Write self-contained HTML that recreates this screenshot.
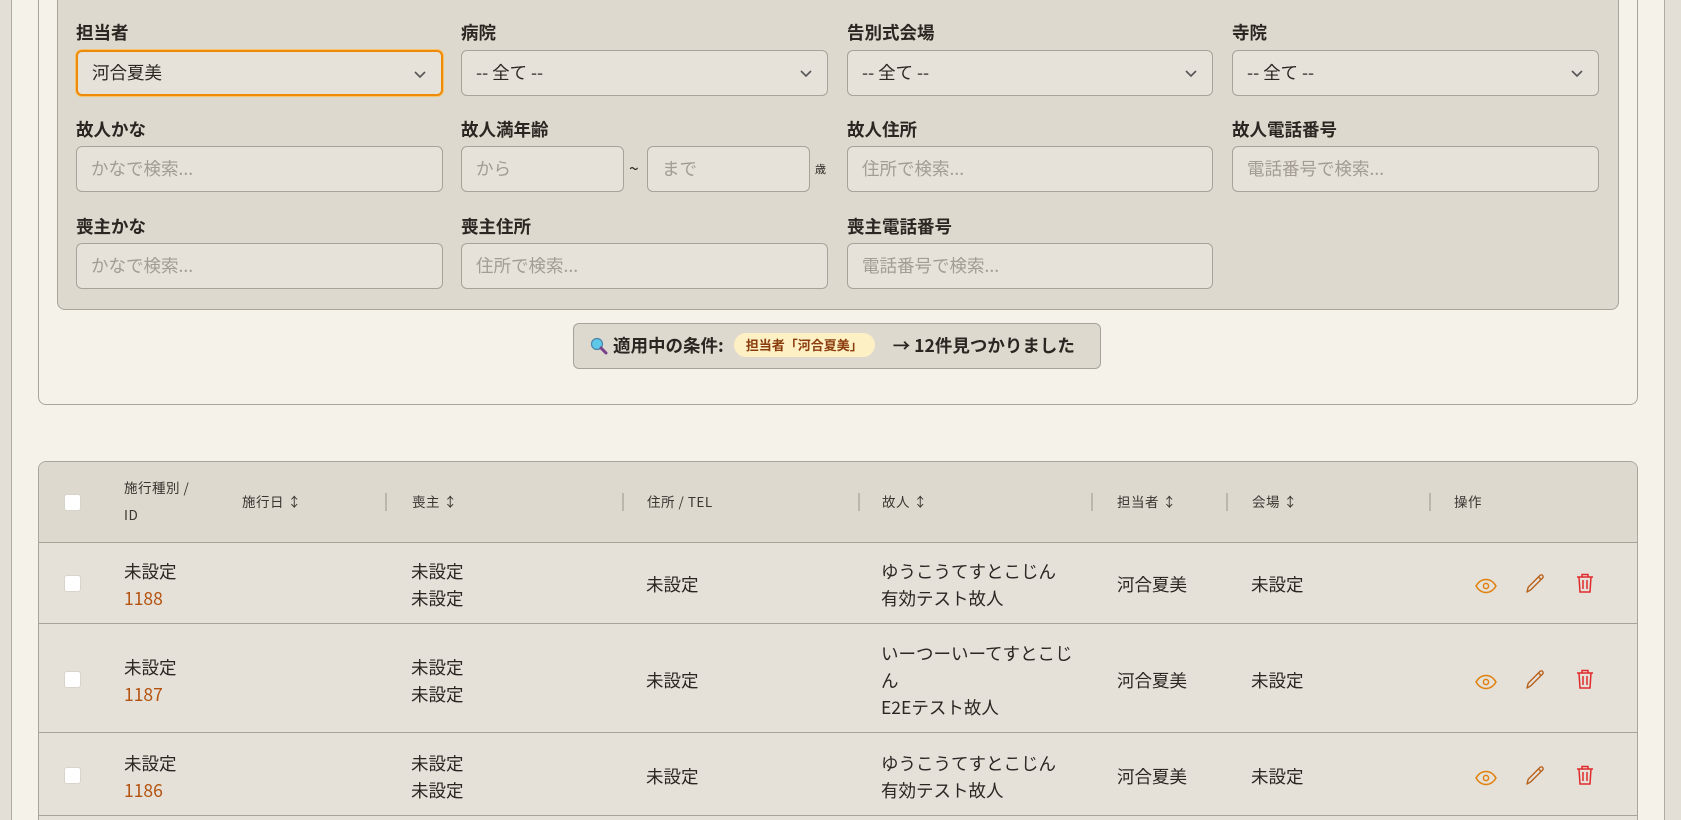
<!DOCTYPE html>
<html><head><meta charset="utf-8"><style>
*{box-sizing:border-box;margin:0;padding:0}
html{overflow:hidden;height:820px}
body{width:1681px;height:820px;overflow:hidden;background:#e3dfd7;font-family:"Noto Sans CJK JP","Liberation Sans",sans-serif;color:#2b2622;position:relative}
.a{position:absolute}
.strip{left:11px;top:0;width:1654px;height:820px;background:#f5f2ea;border-left:1px solid #b0aba2;border-right:1px solid #b0aba2}
.card{left:38px;top:-20px;width:1600px;height:425px;border:1px solid #aaa59c;border-radius:8px;background:#f5f2ea}
.fbox{left:57px;top:-20px;width:1562px;height:330px;border:1px solid #aaa59c;border-radius:8px;background:#ddd9ce}
.lbl{font-size:17.5px;font-weight:700;color:#2b2622;line-height:26px}
.in{height:46px;border:1px solid #a8a39a;border-radius:6px;background:#e6e2da;font-size:17.5px;color:#a29c93;padding-left:14px;line-height:44px}
.sel{color:#2b2622}
.chev{position:absolute;right:14px;top:15px}
.chip{left:573px;top:323px;width:528px;height:46px;border:1px solid #a8a39a;border-radius:6px;background:#ddd9ce;font-size:17.5px;font-weight:700;line-height:44px;padding-left:16px;white-space:nowrap}
.tag{display:inline-block;background:#fdf0c4;color:#8a3c0c;font-size:13px;font-weight:700;border-radius:12px;padding:0 12px;line-height:24px;vertical-align:2px;margin:0 18px 0 10px}
.tbl{left:38px;top:461px;width:1600px;height:370px;border:1px solid #aaa59c;border-radius:8px;background:#e5e1d9;overflow:hidden}
.th{left:0;top:0;width:100%;height:81px;background:#ddd9cf;border-bottom:1px solid #a8a39a}
.h{font-size:13.5px;color:#3a3530;letter-spacing:.5px}
.sep{width:2px;height:18px;background:#bcb7ae;top:31px}
.cb{width:17px;height:17px;background:#fff;border-radius:3px;border:1px solid #d8d4cc}
.t{font-size:17.5px;line-height:27px;color:#2b2622}
.id{color:#b4530f}
</style></head><body>
<div class="a strip"></div>
<div class="a card"></div>
<div class="a fbox"></div>

<div class="a lbl" style="left:76px;top:20px">担当者</div>
<div class="a lbl" style="left:461px;top:20px">病院</div>
<div class="a lbl" style="left:847px;top:20px">告別式会場</div>
<div class="a lbl" style="left:1232px;top:20px">寺院</div>
<div class="a in sel" style="left:76px;top:50px;width:367px;border:2px solid #ee8a0a;box-shadow:0 0 0 1px #f6c36a;line-height:42px">河合夏美<svg class="chev" width="14" height="14" viewBox="0 0 14 14"><path d="M2 5l5 5 5-5" fill="none" stroke="#555" stroke-width="1.6"/></svg></div>
<div class="a in sel" style="left:461px;top:50px;width:367px">-- 全て --<svg class="chev" width="14" height="14" viewBox="0 0 14 14"><path d="M2 5l5 5 5-5" fill="none" stroke="#555" stroke-width="1.6"/></svg></div>
<div class="a in sel" style="left:847px;top:50px;width:366px">-- 全て --<svg class="chev" width="14" height="14" viewBox="0 0 14 14"><path d="M2 5l5 5 5-5" fill="none" stroke="#555" stroke-width="1.6"/></svg></div>
<div class="a in sel" style="left:1232px;top:50px;width:367px">-- 全て --<svg class="chev" width="14" height="14" viewBox="0 0 14 14"><path d="M2 5l5 5 5-5" fill="none" stroke="#555" stroke-width="1.6"/></svg></div>

<div class="a lbl" style="left:76px;top:117px">故人かな</div>
<div class="a lbl" style="left:461px;top:117px">故人満年齢</div>
<div class="a lbl" style="left:847px;top:117px">故人住所</div>
<div class="a lbl" style="left:1232px;top:117px">故人電話番号</div>
<div class="a in" style="left:76px;top:146px;width:367px">かなで検索...</div>
<div class="a in" style="left:461px;top:146px;width:163px">から</div>
<div class="a t" style="left:629px;top:155px">~</div>
<div class="a in" style="left:647px;top:146px;width:163px">まで</div>
<div class="a" style="left:815px;top:161px;font-size:11px">歳</div>
<div class="a in" style="left:847px;top:146px;width:366px">住所で検索...</div>
<div class="a in" style="left:1232px;top:146px;width:367px">電話番号で検索...</div>

<div class="a lbl" style="left:76px;top:214px">喪主かな</div>
<div class="a lbl" style="left:461px;top:214px">喪主住所</div>
<div class="a lbl" style="left:847px;top:214px">喪主電話番号</div>
<div class="a in" style="left:76px;top:243px;width:367px">かなで検索...</div>
<div class="a in" style="left:461px;top:243px;width:367px">住所で検索...</div>
<div class="a in" style="left:847px;top:243px;width:366px">電話番号で検索...</div>

<div class="a chip"><svg width="18" height="18" viewBox="0 0 18 18" style="vertical-align:-3px;margin-right:5px"><circle cx="7" cy="7" r="5.5" fill="#5ec8e8" stroke="#4a86a8" stroke-width="1.2"/><path d="M11 11l5 5" stroke="#7a3f8a" stroke-width="3" stroke-linecap="round"/></svg>適用中の条件:<span class="tag">担当者「河合夏美」</span>→ 12件見つかりました</div>

<div class="a tbl">
 <div class="a th">
  <div class="a cb" style="left:25px;top:32px"></div>
  <div class="a h" style="left:85px;top:12px;line-height:27px">施行種別 /<br>ID</div>
  <div class="a h" style="left:203px;top:29px">施行日 ↕</div>
  <div class="a sep" style="left:346px"></div>
  <div class="a h" style="left:373px;top:29px">喪主 ↕</div>
  <div class="a sep" style="left:583px"></div>
  <div class="a h" style="left:608px;top:29px">住所 / TEL</div>
  <div class="a sep" style="left:819px"></div>
  <div class="a h" style="left:843px;top:29px">故人 ↕</div>
  <div class="a sep" style="left:1052px"></div>
  <div class="a h" style="left:1078px;top:29px">担当者 ↕</div>
  <div class="a sep" style="left:1187px"></div>
  <div class="a h" style="left:1213px;top:29px">会場 ↕</div>
  <div class="a sep" style="left:1390px"></div>
  <div class="a h" style="left:1415px;top:29px">操作</div>
 </div>
</div>
<div id="rows"></div>
<script>
var eye='<svg width="22" height="16" viewBox="0 0 22 16"><path d="M1 8C4 3 7.5 1.5 11 1.5S18 3 21 8c-3 5-6.5 6.5-10 6.5S4 13 1 8z" fill="none" stroke="#e0820f" stroke-width="1.5"/><circle cx="11" cy="8" r="2.6" fill="none" stroke="#e0820f" stroke-width="1.5"/></svg>';
var pen='<svg width="22" height="22" viewBox="0 0 22 22"><path d="M3 20l1.2-4.8L16 3.4a1.8 1.8 0 0 1 2.6 0 1.8 1.8 0 0 1 0 2.6L6.8 17.8z M14.5 5l2.6 2.6" fill="none" stroke="#b9621c" stroke-width="1.4" stroke-linejoin="round"/></svg>';
var tr='<svg width="20" height="22" viewBox="0 0 20 22"><path d="M2 5h16M7 5V2.5h6V5M4 5l1 15h10l1-15M8 8v9M12 8v9" fill="none" stroke="#e02a2a" stroke-width="1.5"/></svg>';
var rows=[[542,82,["ゆうこうてすとこじん","有効テスト故人"],1188],[624,109,["いーつーいーてすとこじ","ん","E2Eテスト故人"],1187],[733,83,["ゆうこうてすとこじん","有効テスト故人"],1186]];
var h='';
rows.forEach(function(r){var y=r[0],ht=r[1],c=y+ht/2;
h+='<div class="a" style="left:39px;top:'+y+'px;width:1598px;height:'+ht+'px;border-bottom:1px solid #a8a39a"></div>';
h+='<div class="a cb" style="left:64px;top:'+(c-8)+'px"></div>';
h+='<div class="a t" style="left:124px;top:'+(c-25)+'px">未設定<br><span class="id">'+r[3]+'</span></div>';
h+='<div class="a t" style="left:411px;top:'+(c-25)+'px">未設定<br>未設定</div>';
h+='<div class="a t" style="left:646px;top:'+(c-12)+'px">未設定</div>';
h+='<div class="a t" style="left:881px;top:'+(c-r[2].length*13.5+2)+'px">'+r[2].join('<br>')+'</div>';
h+='<div class="a t" style="left:1117px;top:'+(c-12)+'px">河合夏美</div>';
h+='<div class="a t" style="left:1251px;top:'+(c-12)+'px">未設定</div>';
h+='<div class="a" style="left:1475px;top:'+(c-8)+'px">'+eye+'</div>';
h+='<div class="a" style="left:1524px;top:'+(c-11)+'px">'+pen+'</div>';
h+='<div class="a" style="left:1575px;top:'+(c-11)+'px">'+tr+'</div>';
});
document.getElementById('rows').innerHTML=h;
</script>
</body></html>
